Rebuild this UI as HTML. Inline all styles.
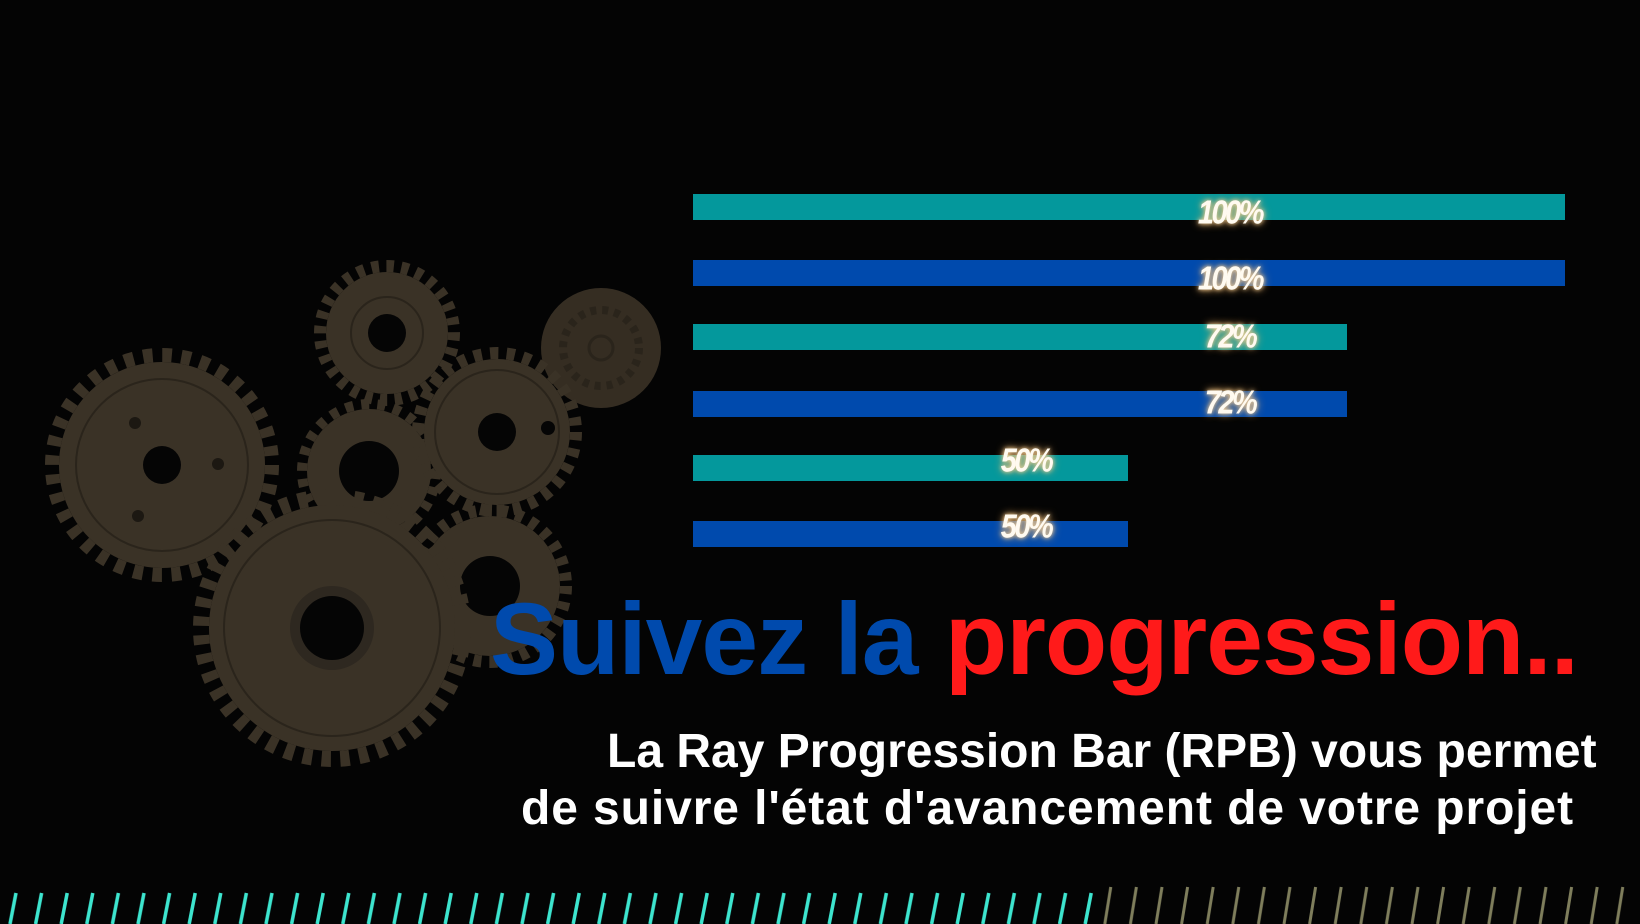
<!DOCTYPE html>
<html><head><meta charset="utf-8"><style>
html,body{margin:0;padding:0;background:#030303;}
#c{position:relative;width:1640px;height:924px;overflow:hidden;background:#040404;font-family:"Liberation Sans",sans-serif;}
.bar{position:absolute;left:693px;height:26px;}
.t{background:#04989c}.b{background:#004aad}
.lbl{position:absolute;color:#fffaf0;font-weight:bold;font-style:italic;font-size:29px;letter-spacing:-2.5px;text-shadow:0 0 4px #ffd9a0,0 0 8px #f0b060;transform:translateX(-50%) scaleY(1.15);line-height:1;}
#title{position:absolute;left:490px;top:588px;font-size:102px;font-weight:bold;white-space:nowrap;letter-spacing:-1px;line-height:1;}
.sub{position:absolute;color:#fff;font-weight:bold;font-size:48px;white-space:nowrap;line-height:1;}
</style></head><body><div id="c">
<svg width="1640" height="924" style="position:absolute;left:0;top:0">
<g fill="#3a3226" stroke="none">
 <g><circle cx="369" cy="471" r="62"/><circle cx="369" cy="471" r="67" fill="none" stroke="#3a3226" stroke-width="10" stroke-dasharray="8.1 8.1"/><circle cx="369" cy="471" r="30" fill="#050505"/></g>
 <g><circle cx="490" cy="586" r="70"/><circle cx="490" cy="586" r="76" fill="none" stroke="#3a3226" stroke-width="12" stroke-dasharray="8 8"/><circle cx="490" cy="586" r="30" fill="#050505"/></g>
 <g><circle cx="387" cy="333" r="61"/><circle cx="387" cy="333" r="67" fill="none" stroke="#3a3226" stroke-width="12" stroke-dasharray="7.5 7.5"/><circle cx="387" cy="333" r="36" fill="none" stroke="#2a241b" stroke-width="2"/><circle cx="387" cy="333" r="19" fill="#050505"/></g>
 <g><circle cx="601" cy="348" r="60" fill="#352d22"/><circle cx="601" cy="348" r="38" fill="none" stroke="#2a241b" stroke-width="8" stroke-dasharray="6 6"/><circle cx="601" cy="348" r="12" fill="none" stroke="#2a241b" stroke-width="3"/></g>
 <g><circle cx="497" cy="432" r="73"/><circle cx="497" cy="432" r="79" fill="none" stroke="#3a3226" stroke-width="12" stroke-dasharray="8.3 8.3"/><circle cx="497" cy="432" r="62" fill="none" stroke="#2a241b" stroke-width="2"/><circle cx="497" cy="432" r="19" fill="#050505"/><circle cx="548" cy="428" r="7" fill="#050505"/></g>
 <g><circle cx="162" cy="465" r="103"/><circle cx="162" cy="465" r="110" fill="none" stroke="#3a3226" stroke-width="14" stroke-dasharray="9.6 9.6"/><circle cx="162" cy="465" r="86" fill="none" stroke="#2a241b" stroke-width="2"/><circle cx="162" cy="465" r="19" fill="#050505"/><circle cx="135" cy="423" r="6" fill="#1c1812"/><circle cx="218" cy="464" r="6" fill="#1c1812"/><circle cx="138" cy="516" r="6" fill="#1c1812"/></g>
 <g><circle cx="332" cy="628" r="123"/><circle cx="332" cy="628" r="131" fill="none" stroke="#3a3226" stroke-width="16" stroke-dasharray="9.4 9.4"/><circle cx="332" cy="628" r="108" fill="none" stroke="#2a241b" stroke-width="2"/><circle cx="332" cy="628" r="42" fill="#2e2820"/><circle cx="332" cy="628" r="32" fill="#050505"/></g>
</g>
</svg>
<svg width="1640" height="50" style="position:absolute;left:0;top:874px">
<defs>
<pattern id="p1" width="25.6" height="50" patternUnits="userSpaceOnUse"><line x1="10" y1="50" x2="16" y2="19" stroke="#3de5cf" stroke-width="3.5"/></pattern>
<pattern id="p2" width="25.6" height="50" patternUnits="userSpaceOnUse"><line x1="4" y1="50" x2="10" y2="13" stroke="#7f7e5c" stroke-width="3"/></pattern>
</defs>
<rect x="0" y="0" width="1094" height="50" fill="url(#p1)"/>
<rect x="1094" y="0" width="546" height="50" fill="url(#p2)"/>
</svg>
<div class="bar t" style="top:194px;width:872px"></div>
<div class="bar b" style="top:260px;width:872px"></div>
<div class="bar t" style="top:324px;width:654px"></div>
<div class="bar b" style="top:391px;width:654px"></div>
<div class="bar t" style="top:455px;width:435px"></div>
<div class="bar b" style="top:521px;width:435px"></div>
<div class="lbl" style="left:1230px;top:199px">100%</div>
<div class="lbl" style="left:1230px;top:265px">100%</div>
<div class="lbl" style="left:1230px;top:323px">72%</div>
<div class="lbl" style="left:1230px;top:389px">72%</div>
<div class="lbl" style="left:1026px;top:447px">50%</div>
<div class="lbl" style="left:1026px;top:513px">50%</div>
<div id="title"><span style="color:#004aad">Suivez la </span><span style="color:#ff1a1a">progression..</span></div>
<div class="sub" style="left:607px;top:728px">La Ray Progression Bar (RPB) vous permet</div>
<div class="sub" style="left:521px;top:785px;letter-spacing:0.9px">de suivre l'état d'avancement de votre projet</div>
</div></body></html>
